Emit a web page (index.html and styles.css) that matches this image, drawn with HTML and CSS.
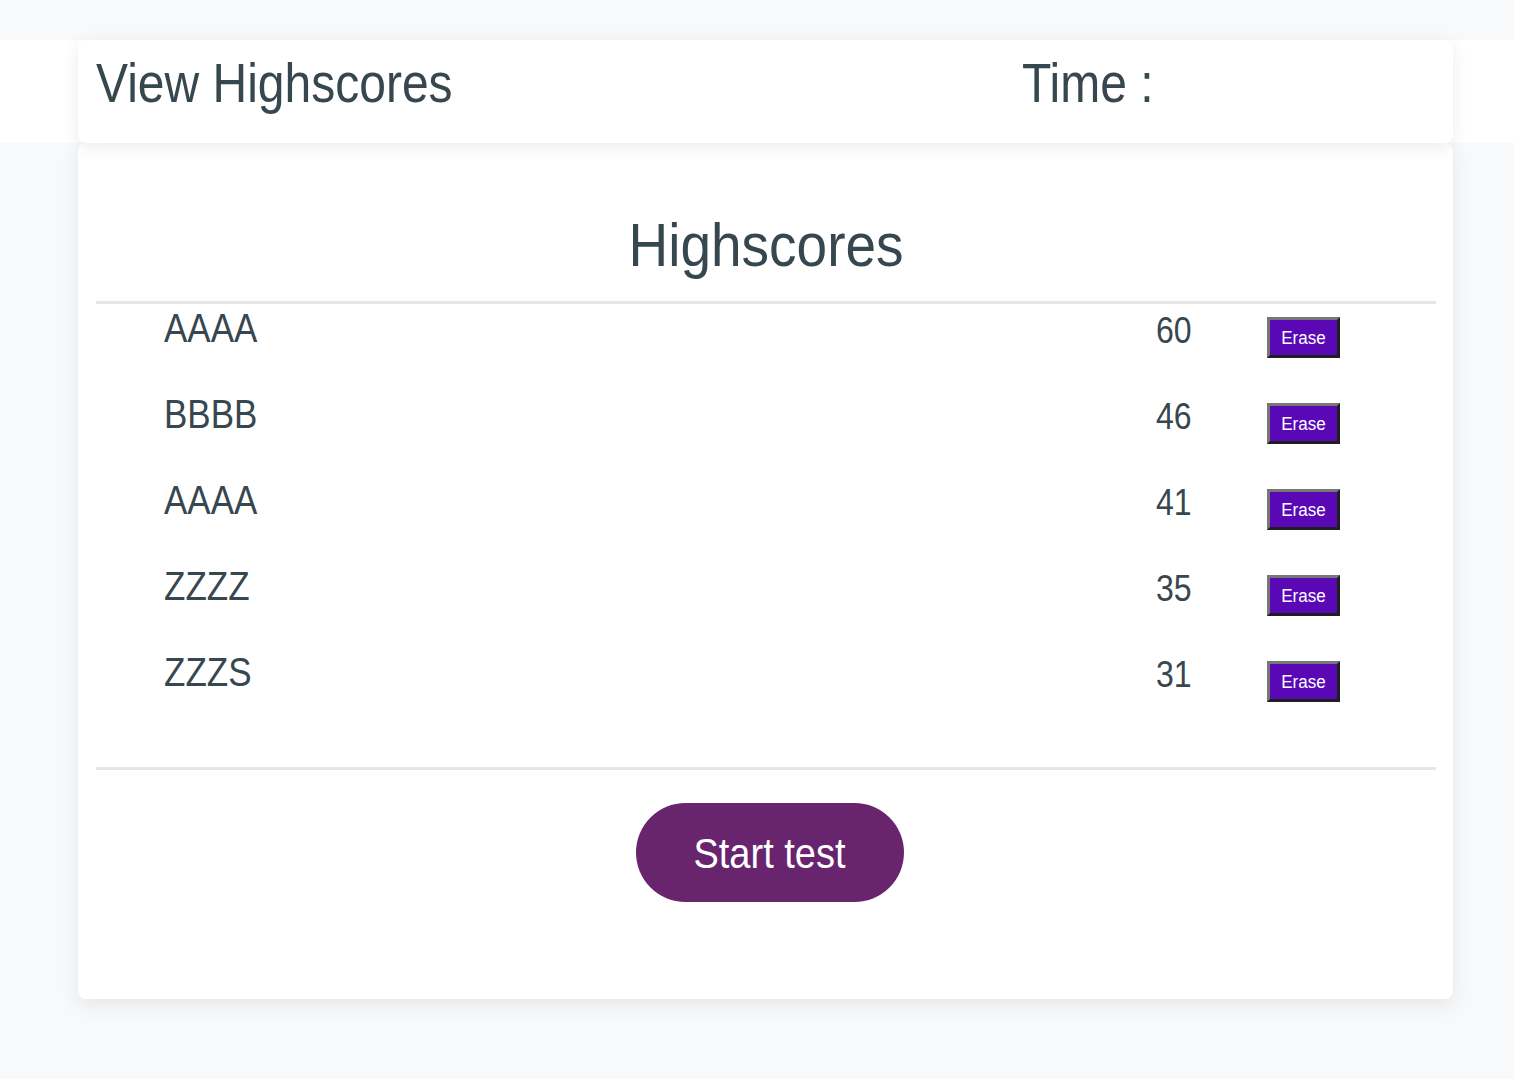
FILE: index.html
```html
<!DOCTYPE html>
<html lang="en">
<head>
<meta charset="utf-8">
<title>Highscores</title>
<link rel="stylesheet" href="styles.css">
</head>
<body>
  <header class="topbar">
    <div class="topbar-card">
      <a class="nav-link"><span class="tall">View Highscores</span></a>
      <div class="timer"><span class="tall">Time :</span> <span class="time-value"></span></div>
    </div>
  </header>
  <main class="card">
    <h1 class="title"><span class="tall">Highscores</span></h1>
    <hr class="divider">
    <ol class="scores">
      <li class="score-row"><span class="name tall">AAAA</span><span class="points tall">60</span><button class="erase"><span class="tall-sm">Erase</span></button></li>
      <li class="score-row"><span class="name tall">BBBB</span><span class="points tall">46</span><button class="erase"><span class="tall-sm">Erase</span></button></li>
      <li class="score-row"><span class="name tall">AAAA</span><span class="points tall">41</span><button class="erase"><span class="tall-sm">Erase</span></button></li>
      <li class="score-row"><span class="name tall">ZZZZ</span><span class="points tall">35</span><button class="erase"><span class="tall-sm">Erase</span></button></li>
      <li class="score-row"><span class="name tall">ZZZS</span><span class="points tall">31</span><button class="erase"><span class="tall-sm">Erase</span></button></li>
    </ol>
    <hr class="divider divider-bottom">
    <div class="actions">
      <button class="start"><span class="tall">Start test</span></button>
    </div>
  </main>
</body>
</html>
```

FILE: styles.css
```css
* { box-sizing: border-box; }

html, body {
  margin: 0;
  padding: 0;
}

body {
  background: #f8f9fa;
  font-family: "Liberation Sans", Arial, sans-serif;
  color: #37474f;
  min-height: 1079px;
}

.tall {
  display: inline-block;
  transform: scaleY(1.17);
}

.tall-sm {
  display: inline-block;
  transform: scaleY(1.1);
}

/* top bar */
.topbar {
  margin-top: 40px;
  background: #ffffff;
  height: 103px;
}

.topbar-card {
  margin-left: 78px;
  width: 1375px;
  height: 103px;
  background: #ffffff;
  border-radius: 8px;
  box-shadow: 0 4px 18px rgba(0, 0, 0, 0.08);
  display: flex;
  align-items: flex-start;
  padding: 15px 0 0 18px;
  position: relative;
  z-index: 1;
}

.nav-link {
  font-size: 48px;
  line-height: 56px;
  color: #37474f;
  text-decoration: none;
}

.timer {
  margin-left: auto;
  width: 431px;
  font-size: 48px;
  line-height: 56px;
}

/* main card */
.card {
  margin-left: 78px;
  width: 1375px;
  background: #ffffff;
  border-radius: 8px;
  box-shadow: 0 6px 20px rgba(0, 0, 0, 0.08);
  padding: 0 17px 97px 18px;
  overflow: hidden;
}

.title {
  margin: 0;
  padding-top: 70px;
  font-size: 55px;
  line-height: 64px;
  font-weight: 400;
  text-align: center;
}

.title .tall { transform: scaleY(1.12); }

.divider {
  margin: 24px 0 0;
  border: 0;
  height: 3px;
  background: #e4e6e9;
}

.divider-bottom {
  margin-top: 33px;
}

.scores {
  list-style: none;
  margin: 0;
  padding: 0;
}

.score-row {
  height: 86px;
  display: grid;
  grid-template-columns: 1fr 36px 73px;
  column-gap: 75px;
  align-items: start;
  padding: 0 96px 0 68px;
}

.name {
  margin-top: 4px;
  font-size: 35px;
  line-height: 40px;
}

.points {
  margin-top: 6px;
  font-size: 32px;
  line-height: 40px;
  white-space: nowrap;
}

.erase {
  margin-top: 13px;
  width: 73px;
  height: 41px;
  padding: 0;
  background: #5a08b5;
  color: #ffffff;
  font-family: "Liberation Sans", Arial, sans-serif;
  font-size: 17px;
  line-height: 20px;
  border-style: solid;
  border-width: 3px;
  border-color: #777777 #1f1f1f #1f1f1f #777777;
}

.actions {
  margin-top: 33px;
  display: flex;
  justify-content: center;
  padding-left: 7px;
}

.start {
  width: 268px;
  height: 99px;
  border: 0;
  border-radius: 50px;
  background: #69246e;
  color: #ffffff;
  font-family: "Liberation Sans", Arial, sans-serif;
  font-size: 38px;
  line-height: 44px;
  padding: 0;
}

.start .tall { transform: scaleY(1.14); }
```
